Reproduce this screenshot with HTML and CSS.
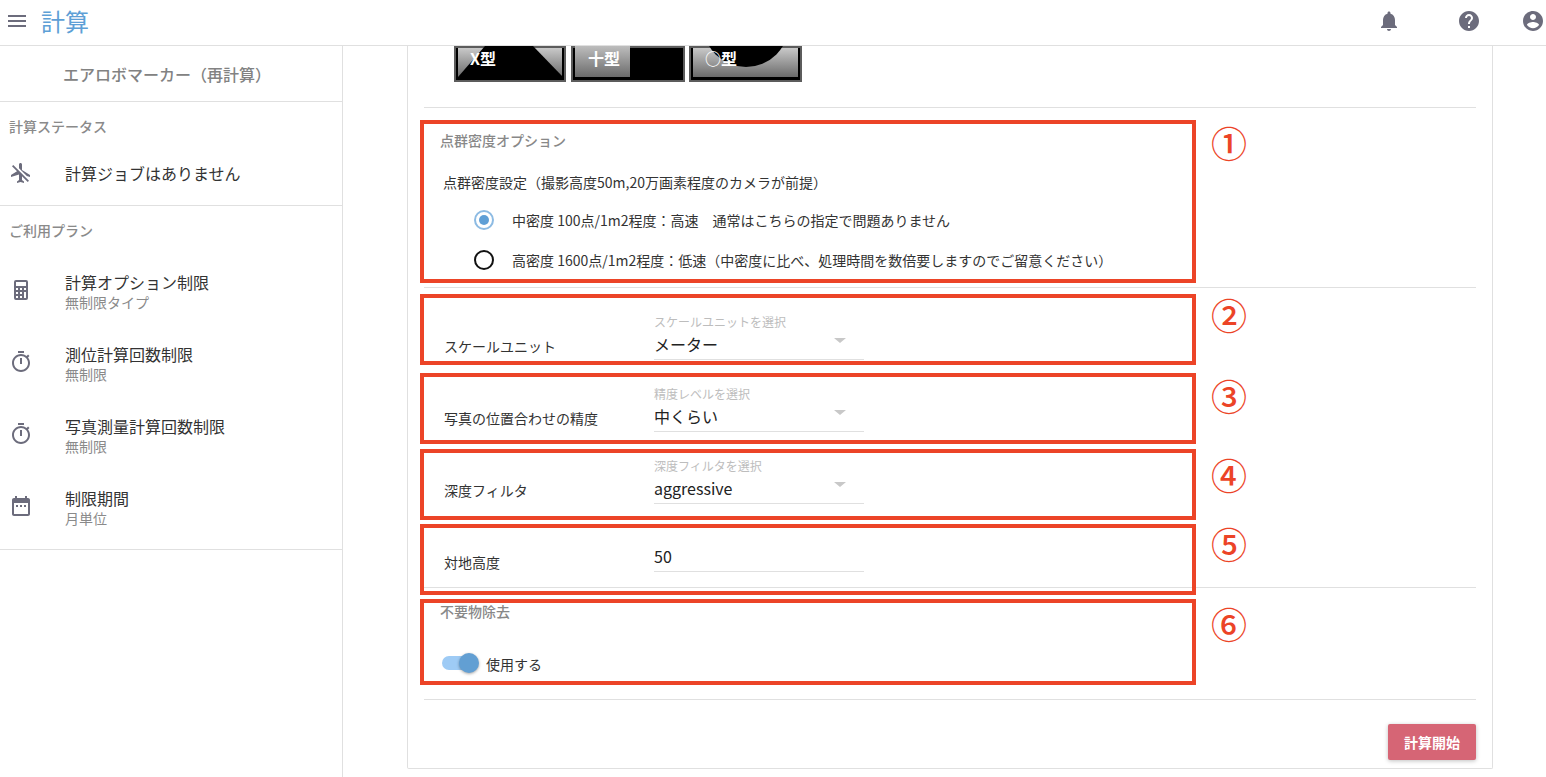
FILE: index.html
```html
<!DOCTYPE html>
<html lang="ja">

<head>
    <meta charset="UTF-8">
    <title>計算</title>
    <link rel="stylesheet" href="styles.css">
</head>

<body>
    <header class="topbar">
        <svg class="icon menu-icon" viewBox="0 0 24 24"><path d="M3 18h18v-2H3v2zm0-5h18v-2H3v2zm0-7v2h18V6H3z"/></svg>
        <div class="page-title">計算</div>
        <div class="topbar-icons">
            <svg class="icon bell-icon" viewBox="0 0 24 24"><path d="M12 22c1.1 0 2-.9 2-2h-4c0 1.1.89 2 2 2zm6-6v-5c0-3.07-1.64-5.64-4.5-6.32V4c0-.83-.67-1.5-1.5-1.5s-1.5.67-1.5 1.5v.68C7.63 5.36 6 7.92 6 11v5l-2 2v1h16v-1l-2-2z"/></svg>
            <svg class="icon" viewBox="0 0 24 24"><path d="M12 2C6.48 2 2 6.48 2 12s4.48 10 10 10 10-4.48 10-10S17.52 2 12 2zm1 17h-2v-2h2v2zm2.07-7.75l-.9.92C13.45 12.9 13 13.5 13 15h-2v-.5c0-1.1.45-2.1 1.17-2.83l1.24-1.26c.37-.36.59-.86.59-1.41 0-1.1-.9-2-2-2s-2 .9-2 2H8c0-2.21 1.79-4 4-4s4 1.79 4 4c0 .88-.36 1.68-.93 2.25z"/></svg>
            <svg class="icon" viewBox="0 0 24 24"><path d="M12 2C6.48 2 2 6.48 2 12s4.48 10 10 10 10-4.48 10-10S17.52 2 12 2zm0 3c1.66 0 3 1.34 3 3s-1.34 3-3 3-3-1.34-3-3 1.34-3 3-3zm0 14.2c-2.5 0-4.71-1.28-6-3.22.03-1.99 4-3.08 6-3.08 1.99 0 5.97 1.09 6 3.08-1.29 1.94-3.5 3.22-6 3.22z"/></svg>
        </div>
    </header>

    <div class="layout">
        <aside class="sidebar">
            <div class="side-head">エアロボマーカー（再計算）</div>

            <div class="side-group status-group">
                <div class="side-label">計算ステータス</div>
                <div class="status-item">
                    <svg class="icon" viewBox="0 0 24 24"><path d="M13 9V3.5c0-.83-.67-1.5-1.5-1.5S10 2.67 10 3.5v3.68l7.83 7.83L21 16v-2l-8-5zM3 5.27l4.99 4.99L2 14v2l8-2.5V19l-2 1.5V22l3.5-1 3.5 1v-1.5L13 19v-3.73L18.73 21 20 19.73 4.27 4 3 5.27z"/></svg>
                    <div class="item-title">計算ジョブはありません</div>
                </div>
            </div>

            <div class="side-group plan-group">
                <div class="side-label">ご利用プラン</div>
                <div class="plan-item">
                    <svg class="icon" viewBox="0 0 24 24"><path d="M7 2h10a2 2 0 0 1 2 2v16a2 2 0 0 1-2 2H7a2 2 0 0 1-2-2V4a2 2 0 0 1 2-2zm0 2v4h10V4H7zm0 6v2h2v-2H7zm4 0v2h2v-2h-2zm4 0v2h2v-2h-2zm-8 4v2h2v-2H7zm4 0v2h2v-2h-2zm4 0v6h2v-6h-2zm-8 4v2h2v-2H7zm4 0v2h2v-2h-2z"/></svg>
                    <div>
                        <div class="item-title">計算オプション制限</div>
                        <div class="item-sub">無制限タイプ</div>
                    </div>
                </div>
                <div class="plan-item">
                    <svg class="icon" viewBox="0 0 24 24"><path d="M15 1H9v2h6V1zm-4 13h2V8h-2v6zm8.03-6.61l1.42-1.42c-.43-.51-.9-.99-1.41-1.41l-1.42 1.42C16.07 4.74 14.12 4 12 4c-4.97 0-9 4.03-9 9s4.02 9 9 9 9-4.03 9-9c0-2.12-.74-4.07-1.97-5.61zM12 20c-3.87 0-7-3.13-7-7s3.13-7 7-7 7 3.13 7 7-3.13 7-7 7z"/></svg>
                    <div>
                        <div class="item-title">測位計算回数制限</div>
                        <div class="item-sub">無制限</div>
                    </div>
                </div>
                <div class="plan-item">
                    <svg class="icon" viewBox="0 0 24 24"><path d="M15 1H9v2h6V1zm-4 13h2V8h-2v6zm8.03-6.61l1.42-1.42c-.43-.51-.9-.99-1.41-1.41l-1.42 1.42C16.07 4.74 14.12 4 12 4c-4.97 0-9 4.03-9 9s4.02 9 9 9 9-4.03 9-9c0-2.12-.74-4.07-1.97-5.61zM12 20c-3.87 0-7-3.13-7-7s3.13-7 7-7 7 3.13 7 7-3.13 7-7 7z"/></svg>
                    <div>
                        <div class="item-title">写真測量計算回数制限</div>
                        <div class="item-sub">無制限</div>
                    </div>
                </div>
                <div class="plan-item">
                    <svg class="icon" viewBox="0 0 24 24"><path d="M9 11H7v2h2v-2zm4 0h-2v2h2v-2zm4 0h-2v2h2v-2zm2-7h-1V2h-2v2H8V2H6v2H5c-1.11 0-1.99.9-1.99 2L3 20c0 1.1.89 2 2 2h14c1.1 0 2-.9 2-2V6c0-1.1-.9-2-2-2zm0 16H5V9h14v11z"/></svg>
                    <div>
                        <div class="item-title">制限期間</div>
                        <div class="item-sub">月単位</div>
                    </div>
                </div>
            </div>
        </aside>

        <main class="content">
            <div class="card">
                <div class="thumbs">
                    <div class="thumb thumb-x"><span class="thumb-shape"></span><span class="thumb-label">X型</span></div>
                    <div class="thumb thumb-cross"><span class="thumb-shape"></span><span class="thumb-label">十型</span></div>
                    <div class="thumb thumb-circle"><span class="thumb-shape"></span><span class="thumb-label">○型</span></div>
                </div>

                <section class="density">
                    <div class="section-title">点群密度オプション</div>
                    <div class="density-note">点群密度設定（撮影高度50m,20万画素程度のカメラが前提）</div>
                    <div class="radio-row">
                        <span class="radio radio-on"></span>
                        <span>中密度 100点/1m2程度：高速　通常はこちらの指定で問題ありません</span>
                    </div>
                    <div class="radio-row">
                        <span class="radio"></span>
                        <span>高密度 1600点/1m2程度：低速（中密度に比べ、処理時間を数倍要しますのでご留意ください）</span>
                    </div>
                </section>

                <section class="fields">
                    <div class="field-row">
                        <div class="field-label">スケールユニット</div>
                        <div class="field">
                            <div class="field-hint">スケールユニットを選択</div>
                            <div class="field-value">メーター<span class="caret"></span></div>
                        </div>
                    </div>
                    <div class="field-row">
                        <div class="field-label">写真の位置合わせの精度</div>
                        <div class="field">
                            <div class="field-hint">精度レベルを選択</div>
                            <div class="field-value">中くらい<span class="caret"></span></div>
                        </div>
                    </div>
                    <div class="field-row">
                        <div class="field-label">深度フィルタ</div>
                        <div class="field">
                            <div class="field-hint">深度フィルタを選択</div>
                            <div class="field-value">aggressive<span class="caret"></span></div>
                        </div>
                    </div>
                    <div class="field-row field-row-short">
                        <div class="field-label">対地高度</div>
                        <div class="field">
                            <div class="field-value">50</div>
                        </div>
                    </div>
                </section>

                <section class="removal">
                    <div class="section-title">不要物除去</div>
                    <div class="switch-row">
                        <span class="switch"><span class="switch-knob"></span></span>
                        <span>使用する</span>
                    </div>
                </section>

                <div class="actions">
                    <button class="start-btn" type="button">計算開始</button>
                </div>

                <!-- red annotation boxes over the form -->
                <div class="mark mark-1"><span class="mark-num">①</span></div>
                <div class="mark mark-2"><span class="mark-num">②</span></div>
                <div class="mark mark-3"><span class="mark-num">③</span></div>
                <div class="mark mark-4"><span class="mark-num">④</span></div>
                <div class="mark mark-5"><span class="mark-num">⑤</span></div>
                <div class="mark mark-6"><span class="mark-num">⑥</span></div>
            </div>
        </main>
    </div>
</body>

</html>
```

FILE: styles.css
```css
* {
    box-sizing: border-box;
}

body {
    margin: 0;
    height: 100vh;
    overflow: hidden;
    display: flex;
    flex-direction: column;
    font-family: "Noto Sans CJK JP", "Noto Sans", sans-serif;
    font-size: 14px;
    color: #333;
    background-color: #fff;
}

.icon {
    width: 24px;
    height: 24px;
    flex: none;
    fill: #6c6c7c;
}

/* top bar */
.topbar {
    display: flex;
    align-items: center;
    height: 46px;
    padding-bottom: 3px;
    padding-left: 5px;
    border-bottom: 1px solid #e0e0e0;
}

.menu-icon {
    width: 24px;
}

.page-title {
    margin-left: 12px;
    font-size: 24px;
    line-height: 42px;
    color: #5e9fd6;
}

.topbar-icons {
    display: flex;
    gap: 40px;
    margin-left: auto;
    margin-right: 1px;
}

.bell-icon {
    margin-right: 16px;
}

/* sidebar */
.layout {
    flex: 1;
    display: flex;
    min-height: 0;
}

.sidebar {
    width: 343px;
    flex: none;
    border-right: 1px solid #e0e0e0;
}

.side-head {
    height: 56px;
    padding-right: 8px;
    border-bottom: 1px solid #e0e0e0;
    font-size: 16px;
    font-weight: 500;
    line-height: 56px;
    text-align: center;
    color: #828282;
}

.side-group {
    border-bottom: 1px solid #e0e0e0;
}

.status-group {
    height: 104px;
}

.plan-group {
    height: 344px;
}

.side-label {
    padding: 14px 0 0 9px;
    font-weight: 500;
    line-height: 20px;
    color: #8a8a8a;
}

.status-item {
    display: flex;
    align-items: center;
    gap: 32px;
    height: 24px;
    margin-top: 25px;
    padding-left: 9px;
}

.plan-group .side-label {
    margin-bottom: 15px;
}

.plan-item {
    display: flex;
    align-items: center;
    gap: 32px;
    height: 72px;
    padding-left: 9px;
}

.plan-item .icon {
    margin-bottom: 2px;
}

.item-title {
    font-size: 16px;
    line-height: 22px;
    color: #333;
}

.item-sub {
    font-size: 14px;
    line-height: 18px;
    color: #8a8a8a;
}

/* main form */
.content {
    flex: 1;
    min-width: 0;
    padding: 0 53px 8px 64px;
}

.card {
    position: relative;
    height: 100%;
    padding: 0 16px;
    border: 1px solid #e0e0e0;
    border-top: none;
    border-radius: 0 0 2px 2px;
}

.thumbs {
    display: flex;
    height: 62px;
    padding-left: 30px;
    border-bottom: 1px solid #e0e0e0;
}

.thumb {
    position: relative;
    overflow: hidden;
    height: 36px;
    border: solid #000;
    border-width: 0 4px 5px;
    outline: 2px solid #5c5c5c;
    outline-offset: -2px;
    background: linear-gradient(#cfcfcf, #6b6b6b);
}

.thumb-x {
    width: 112px;
}

.thumb-cross {
    width: 114px;
    margin-left: 5px;
    background: #000;
}

.thumb-circle {
    width: 113px;
    margin-left: 4px;
}

.thumb-shape {
    position: absolute;
    display: block;
}

.thumb-x .thumb-shape {
    inset: 0;
    background: #000;
    clip-path: polygon(27px 0, 75px 0, 105px 31px, 0 31px);
}

.thumb-cross .thumb-shape {
    left: 0;
    top: 0;
    width: 55px;
    height: 31px;
    background: linear-gradient(#bdbdbd, #6b6b6b);
}

.thumb-circle .thumb-shape {
    left: 10px;
    top: -65px;
    width: 86px;
    height: 86px;
    border-radius: 50%;
    background: #000;
}

.thumb-label {
    position: absolute;
    top: 2px;
    font-size: 16px;
    font-weight: 700;
    line-height: 20px;
    color: #fff;
}

.thumb-x .thumb-label {
    left: 12px;
}

.thumb-cross .thumb-label {
    left: 13px;
}

.thumb-circle .thumb-label {
    left: 12px;
}

.section-title {
    font-weight: 500;
    line-height: 20px;
    padding-left: 16px;
    color: #888;
}

.density {
    height: 180px;
    padding-top: 22px;
    border-bottom: 1px solid #e0e0e0;
}

.density-note {
    margin: 22px 0 8px 19px;
    line-height: 20px;
}

.radio-row {
    display: flex;
    align-items: center;
    gap: 18px;
    height: 40px;
    padding-left: 50px;
}

.radio {
    position: relative;
    width: 20px;
    height: 20px;
    border: 2px solid #111;
    border-radius: 50%;
}

.radio-on {
    border-color: #8dbbe3;
}

.radio-on::after {
    content: "";
    position: absolute;
    inset: 3px;
    border-radius: 50%;
    background: #5f9fd6;
}

.fields {
    padding-bottom: 15px;
    border-bottom: 1px solid #e0e0e0;
}

.field-row {
    display: flex;
    align-items: flex-end;
    height: 72px;
    padding-left: 20px;
}

.field-row-short {
    height: 68px;
}

.field-label {
    width: 210px;
    margin-bottom: 4px;
    line-height: 20px;
}

.field-row-short .field-label {
    margin-bottom: 0;
}

.field {
    width: 210px;
}

.field-hint {
    font-size: 12px;
    line-height: 16px;
    color: #bdbdbd;
}

.field-value {
    display: flex;
    justify-content: space-between;
    align-items: center;
    height: 30px;
    padding: 0 18px 2px 0;
    border-bottom: 1px solid #e0e0e0;
    font-size: 16px;
    color: #222;
}

.field-row-short .field-value {
    height: 29px;
    padding-bottom: 3px;
}

.caret {
    margin-bottom: 6px;
    border-top: 5px solid #c8c8c8;
    border-left: 6px solid transparent;
    border-right: 6px solid transparent;
}

.removal {
    height: 112px;
    padding-top: 13px;
    border-bottom: 1px solid #e0e0e0;
}

.switch-row {
    display: flex;
    align-items: center;
    gap: 8px;
    height: 24px;
    margin-top: 31px;
    padding-left: 18px;
}

.switch {
    position: relative;
    width: 36px;
    height: 14px;
    margin-top: -2px;
    border-radius: 7px;
    background: #9ecbf5;
}

.switch-knob {
    position: absolute;
    right: -1px;
    top: -3px;
    width: 20px;
    height: 20px;
    border-radius: 50%;
    background: #629fd3;
    box-shadow: 0 1px 3px rgba(0, 0, 0, 0.35);
}

.actions {
    display: flex;
    justify-content: flex-end;
    padding-top: 24px;
}

.start-btn {
    width: 88px;
    height: 36px;
    border: none;
    border-radius: 2px;
    background: #d66575;
    box-shadow: 0 1px 4px rgba(0, 0, 0, 0.25);
    font-family: inherit;
    font-size: 14px;
    font-weight: 700;
    color: #fff;
}

/* annotations */
.mark {
    position: absolute;
    left: 12px;
    width: 776px;
    border: 4px solid #ec4427;
}

.mark-num {
    position: absolute;
    left: calc(100% + 19px);
    font-size: 36px;
    font-weight: 500;
    line-height: 36px;
    color: #ec4427;
}

.mark-1 {
    top: 74px;
    height: 163px;
}

.mark-1 .mark-num {
    top: 0;
}

.mark-2 {
    top: 248px;
    height: 71px;
}

.mark-2 .mark-num {
    top: -2px;
}

.mark-3 {
    top: 327px;
    height: 71px;
}

.mark-3 .mark-num {
    top: 0;
}

.mark-4 {
    top: 403px;
    height: 71px;
}

.mark-4 .mark-num {
    top: 3px;
}

.mark-5 {
    top: 478px;
    height: 71px;
}

.mark-5 .mark-num {
    top: -3px;
}

.mark-6 {
    top: 553px;
    height: 86px;
}

.mark-6 .mark-num {
    top: 2px;
}
```
